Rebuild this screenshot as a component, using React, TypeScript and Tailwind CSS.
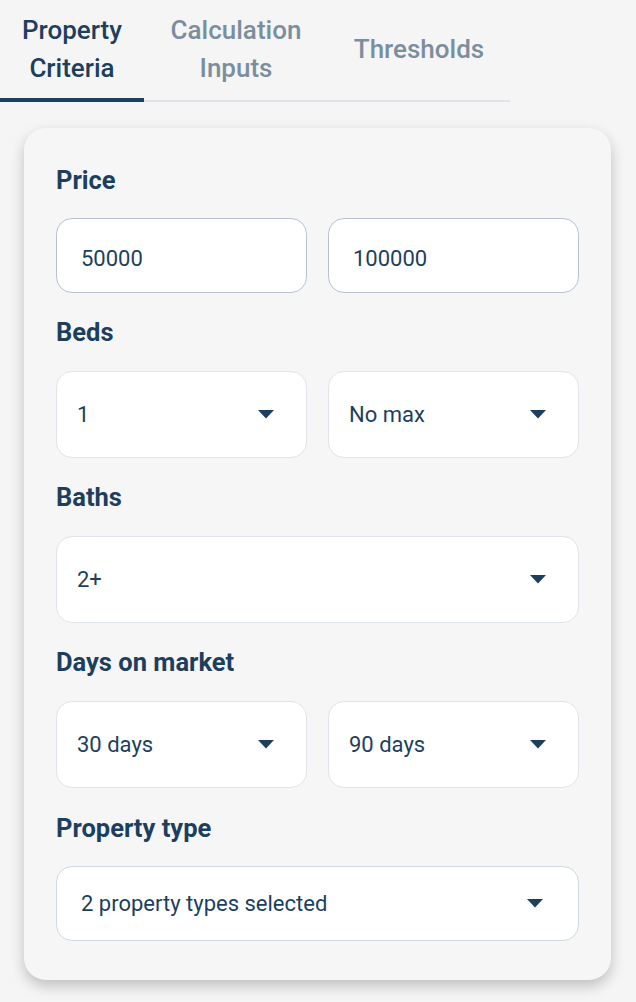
import React from "react";

const Caret = () => (
  <svg width="16" height="9" viewBox="0 0 16 9" className="shrink-0">
    <path d="M0 0 L16 0 L8 8.5 Z" fill="#1d3f5e" />
  </svg>
);

const Label = ({ children, className = "" }: { children: React.ReactNode; className?: string }) => (
  <div className={`h-[30px] flex items-center text-[25.5px] font-bold text-[#1d3f5e] ${className}`}>
    {children}
  </div>
);

const Input = ({ value }: { value: string }) => (
  <div className="h-[75px] flex-1 rounded-[16px] border-[1.5px] border-[#b6c3cf] bg-white flex items-center pl-[24px] pt-[5px] text-[22px] text-[#1d3f5e]">
    {value}
  </div>
);

const Select = ({ value }: { value: string }) => (
  <div className="h-[87px] flex-1 rounded-[16px] border-[1.5px] border-[#dfe5ea] bg-white flex items-center justify-between pl-[20px] pr-[32px] text-[22px] text-[#1d3f5e]">
    <span>{value}</span>
    <Caret />
  </div>
);

export default function App() {
  return (
    <div
      className="w-[636px] h-[1002px] bg-[#f5f5f5] overflow-hidden"
      style={{ fontFamily: "Roboto, 'Noto Sans', sans-serif" }}
    >
      {/* Tabs */}
      <div className="flex w-[510px] h-[102px] border-b-[2px] border-[#dde3e8]">
        <div className="w-[144px] relative flex items-center justify-center pb-[2px] text-center text-[26px] font-medium leading-[38px] text-[#1d3f5e]">
          <span>
            Property
            <br />
            Criteria
          </span>
          <div className="absolute left-0 right-0 bottom-[-2px] h-[4px] bg-[#1d3f5e]" />
        </div>
        <div className="w-[184px] flex items-center justify-center pb-[2px] text-center text-[26px] font-medium leading-[38px] text-[#7b8e9e]">
          <span>
            Calculation
            <br />
            Inputs
          </span>
        </div>
        <div className="flex-1 flex items-center justify-center pb-[2px] text-center text-[26px] font-medium text-[#7b8e9e]">
          Thresholds
        </div>
      </div>

      {/* Card */}
      <div className="mx-[24px] mt-[26px] w-[587px] rounded-[22px] bg-[#f6f6f6] shadow-[0_6px_14px_rgba(0,0,0,0.22)] px-[32px] pt-[37px] pb-[39px]">
        <Label>Price</Label>
        <div className="flex gap-[21px] mt-[23px]">
          <Input value="50000" />
          <Input value="100000" />
        </div>

        <Label className="mt-[24px]">Beds</Label>
        <div className="flex gap-[21px] mt-[24px]">
          <Select value="1" />
          <Select value="No max" />
        </div>

        <Label className="mt-[24px]">Baths</Label>
        <div className="flex mt-[24px]">
          <Select value="2+" />
        </div>

        <Label className="mt-[24px]">Days on market</Label>
        <div className="flex gap-[21px] mt-[24px]">
          <Select value="30 days" />
          <Select value="90 days" />
        </div>

        <Label className="mt-[25px]">Property type</Label>
        <div className="flex mt-[23px]">
          <div className="flex-1 h-[75px] rounded-[16px] border-[1.5px] border-[#cfd9e0] bg-white flex items-center justify-between pl-[24px] pr-[35px] text-[22px] text-[#1d3f5e]">
            <span>2 property types selected</span>
            <Caret />
          </div>
        </div>
      </div>
    </div>
  );
}
